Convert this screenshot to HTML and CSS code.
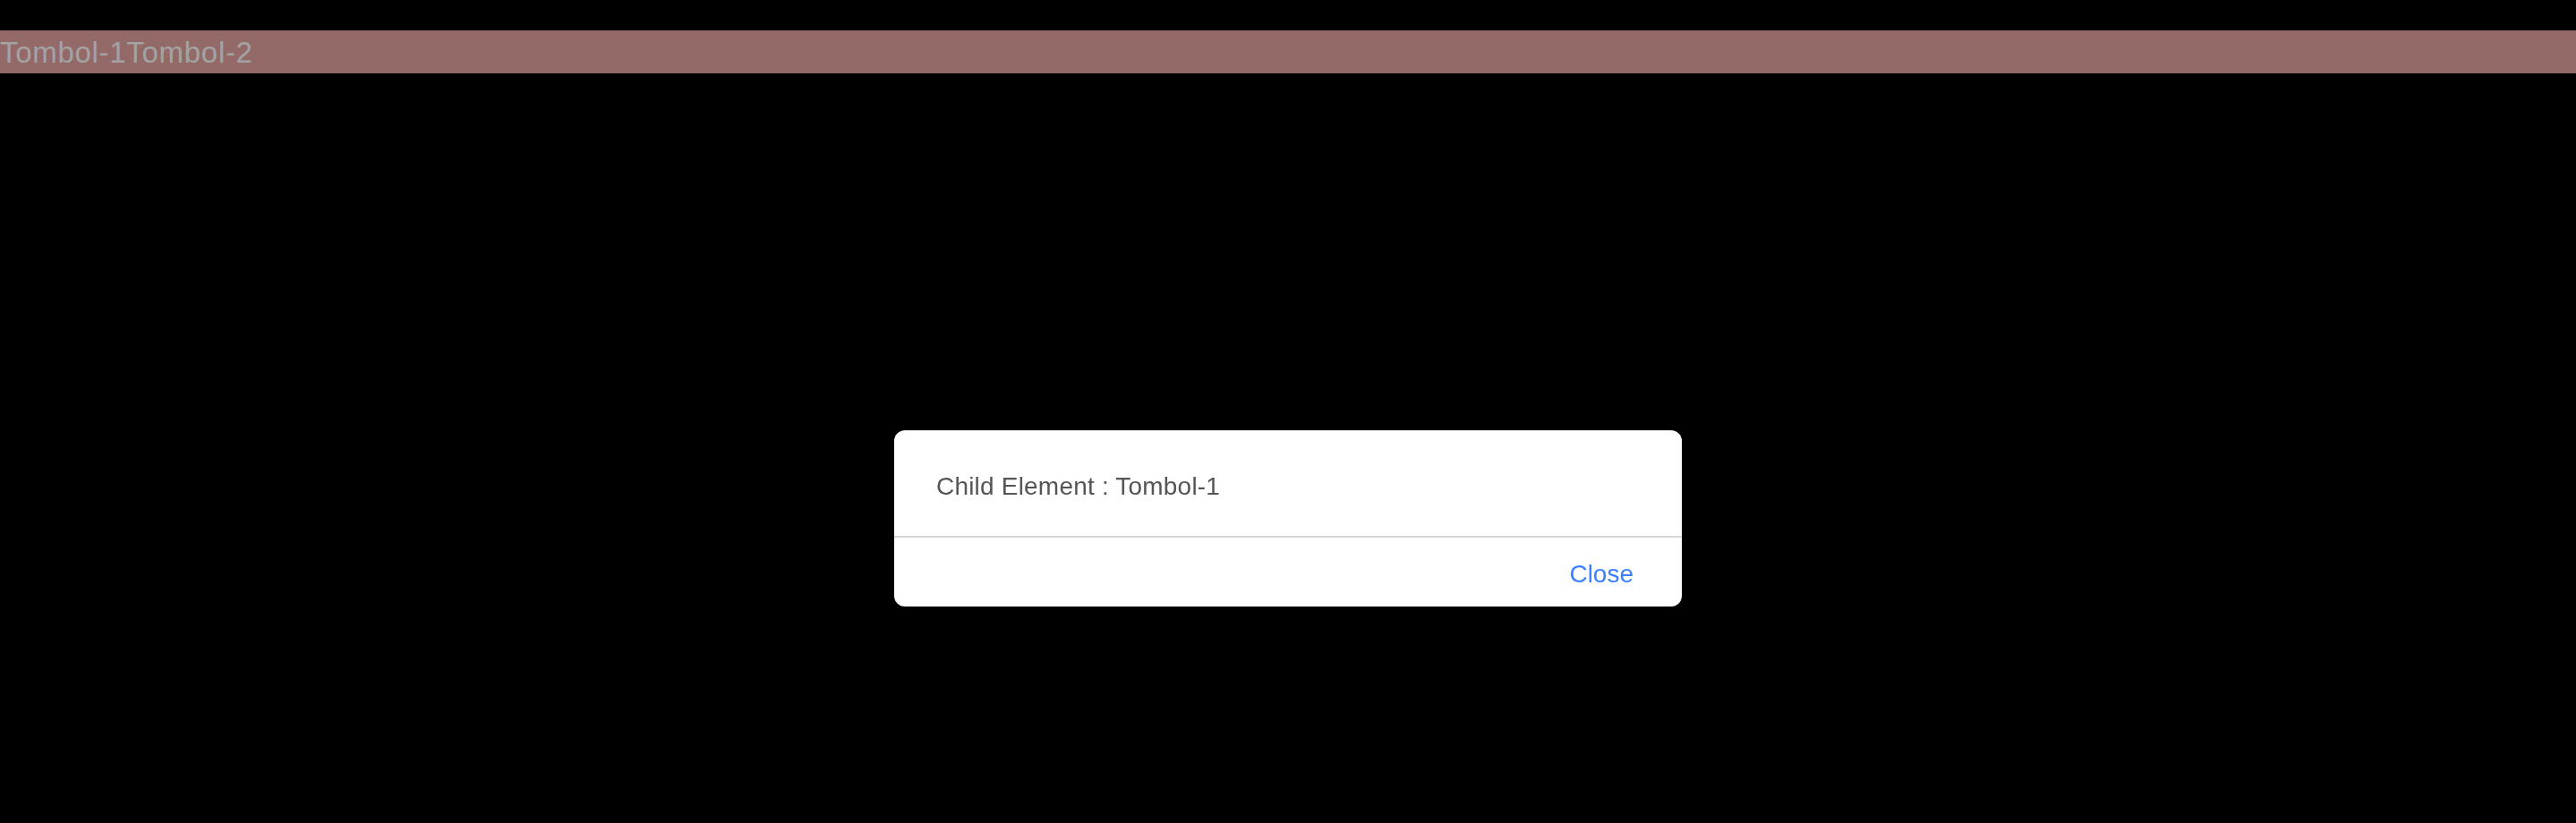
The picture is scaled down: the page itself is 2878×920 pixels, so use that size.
FILE: index.html
```html
<!DOCTYPE html>
<html lang="en">
<head>
<meta charset="utf-8">
<title>Tombol</title>
<link rel="stylesheet" href="styles.css">
</head>
<body>
  <div class="page">
    <div class="bar">
      <button class="bar-btn">Tombol-1</button><button class="bar-btn">Tombol-2</button>
    </div>
  </div>
  <div class="overlay">
    <div class="alert">
      <div class="alert-message">Child Element : Tombol-1</div>
      <div class="alert-footer">
        <button class="alert-btn">Close</button>
      </div>
    </div>
  </div>
</body>
</html>
```
FILE: styles.css
```css
html, body {
  margin: 0;
  padding: 0;
  background: #000;
  height: 100%;
}
body {
  font-family: "Liberation Sans", Arial, sans-serif;
}
.page {
  padding-top: 34px;
}
.bar {
  display: flex;
  height: 48px;
  align-items: center;
  background: #946a68;
}
.bar-btn {
  border: 0;
  background: transparent;
  padding: 2px 0 0 0;
  margin: 0;
  font-family: "Liberation Sans", Arial, sans-serif;
  font-size: 33px;
  line-height: 48px;
  letter-spacing: 0.7px;
  color: #a3a3a3;
}
.overlay {
  position: fixed;
  inset: 0;
  display: flex;
  justify-content: center;
  align-items: flex-start;
  padding-top: 481px;
  box-sizing: border-box;
}
.alert {
  width: 880px;
  background: #fff;
  border-radius: 12px;
  overflow: hidden;
}
.alert-message {
  padding: 46px 46px 38px 47px;
  font-size: 28px;
  line-height: 34px;
  letter-spacing: 0.2px;
  color: #555;
}
.alert-footer {
  border-top: 2px solid #d6d6d6;
  display: flex;
  justify-content: flex-end;
  padding: 24px 54px 19px 0;
}
.alert-btn {
  border: 0;
  background: transparent;
  padding: 0;
  margin: 0;
  font-family: "Liberation Sans", Arial, sans-serif;
  font-size: 28px;
  line-height: 34px;
  color: #3880ff;
}
```
